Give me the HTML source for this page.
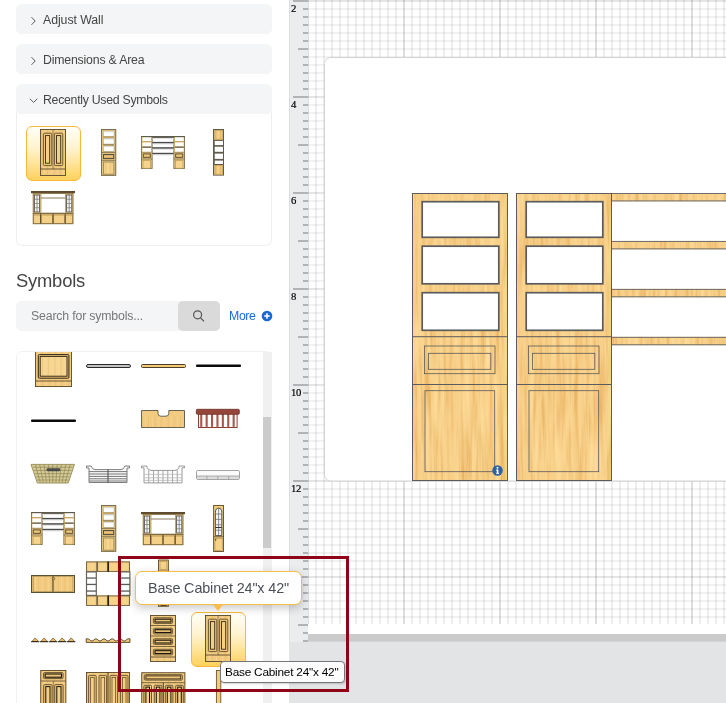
<!DOCTYPE html>
<html lang="en"><head><meta charset="utf-8"><title>Symbols</title>
<style>
*{box-sizing:border-box}
html,body{margin:0;padding:0}
body{width:726px;height:703px;overflow:hidden;background:#fff;position:relative;font-family:"Liberation Sans", sans-serif;color:#454545}
.abs{position:absolute}
.hdr span,.h2,.search span,.more,.tip span,.rl{will-change:transform}
.hdr{position:absolute;left:16px;width:256px;height:30px;background:#f4f5f6;border-radius:5px;font-size:12.3px;line-height:33px;color:#454545}
.hdr span{position:absolute;left:27px;top:0;white-space:nowrap}
.hdr svg{position:absolute;left:0;top:0}
.rbody{position:absolute;left:16px;top:108px;width:256px;height:138px;border:1px solid #efeff1;border-top:none;border-radius:0 0 6px 6px;background:#fff}
.sel{position:absolute;width:55px;height:55px;border:1px solid #f7b93a;border-radius:6px;background:linear-gradient(#fffef8 0%,#fff3cf 40%,#ffd25e 100%)}
.h2{position:absolute;left:16px;top:269px;font-size:18.4px;letter-spacing:-0.22px;line-height:24px;color:#454545;white-space:nowrap}
.search{position:absolute;left:16px;top:301px;width:204px;height:30px;background:#f4f5f7;border-radius:5px}
.search span{position:absolute;left:15px;top:0;line-height:31px;font-size:12.3px;letter-spacing:-0.167px;color:#777;white-space:nowrap}
.sbtn{position:absolute;left:162px;top:0;width:42px;height:30px;background:#dadadb;border-radius:5px}
.more{position:absolute;left:229px;top:301px;line-height:31px;font-size:12.3px;letter-spacing:-0.36px;color:#1b6ae0;white-space:nowrap}
.list{position:absolute;left:16px;top:351px;width:256px;height:360px;border:1px solid #f2f2f3;border-radius:6px 6px 0 0;background:#fff;overflow:hidden}
.track{position:absolute;left:263px;top:352px;width:9px;height:351px;background:#f0f0f0}
.thumb{position:absolute;left:263px;top:417px;width:8px;height:131px;background:#cbcbcb}
.tip{position:absolute;left:135px;top:571px;width:167px;height:34px;border:1px solid #f7bd4a;border-radius:7px;background:#fff;box-shadow:0 3px 10px rgba(0,0,0,.22);font-size:14.4px;letter-spacing:-0.135px;line-height:33px;color:#4b4f5a;white-space:nowrap}
.tip span{position:absolute;left:12px;top:0}
.ntip{position:absolute;left:220px;top:661px;width:125px;height:22px;border:1px solid #767676;border-radius:4px;background:#fcfcfc;box-shadow:1px 1px 2px rgba(0,0,0,.18);font-size:11.8px;letter-spacing:-0.215px;line-height:21px;color:#000;white-space:nowrap}
.ntip span{position:absolute;left:4px;top:0}
.frame{position:absolute;left:118px;top:556px;width:231px;height:136px;border:3px solid #8d0516}
.rl{position:absolute;left:291px;font-family:"Liberation Serif", serif;font-size:10.7px;letter-spacing:-0.3px;line-height:12px;color:#000;-webkit-text-stroke:0.2px #000}
</style></head>
<body>
<div class="abs" style="left:289px;top:0;width:437px;height:703px;background:#e3e4e6"></div>
<svg class="abs" style="left:289px;top:0" width="437" height="642" viewBox="289 0 437 642">
<defs>
<pattern id="gmin" x="307" y="0" width="8" height="8" patternUnits="userSpaceOnUse"><rect x="0" y="0" width="2" height="8" fill="#000" opacity="0.066"/><rect x="0" y="0" width="8" height="2" fill="#000" opacity="0.052"/></pattern>
<pattern id="gmaj" x="307" y="0" width="96" height="96" patternUnits="userSpaceOnUse"><rect x="0" y="0" width="2" height="96" fill="#000" opacity="0.065"/><rect x="0" y="0" width="96" height="2" fill="#000" opacity="0.05"/></pattern>
<filter id="wood" x="0" y="0" width="100%" height="100%" color-interpolation-filters="sRGB"><feTurbulence type="fractalNoise" baseFrequency="0.28 0.014" numOctaves="3" seed="7" result="n"/><feColorMatrix in="n" type="matrix" values="0 0 0 0 0.90  0 0 0 0 0.68  0 0 0 0 0.36  1.9 0 0 0 -0.76"/><feComposite in2="SourceGraphic" operator="in"/></filter>
<filter id="woodl" x="0" y="0" width="100%" height="100%" color-interpolation-filters="sRGB"><feTurbulence type="fractalNoise" baseFrequency="0.2 0.016" numOctaves="2" seed="21" result="n"/><feColorMatrix in="n" type="matrix" values="0 0 0 0 1  0 0 0 0 0.88  0 0 0 0 0.62  0 1.8 0 0 -0.7"/><feComposite in2="SourceGraphic" operator="in"/></filter>
</defs>
<rect x="308" y="0" width="418" height="634" fill="#fff"/>
<rect x="308" y="0" width="418" height="624" fill="url(#gmin)"/>
<rect x="308" y="0" width="418" height="624" fill="url(#gmaj)"/>
<rect x="308" y="634" width="418" height="7.6" fill="#cbcbcb"/>
<rect x="289" y="0" width="19" height="642" fill="#ebecee"/>
<rect x="289" y="0" width="1" height="642" fill="#dcdde0"/>
<rect x="293" y="0" width="15" height="2" fill="#b1b3b6"/>
<rect x="303" y="8" width="5" height="2" fill="#b1b3b6"/>
<rect x="303" y="16" width="5" height="2" fill="#b1b3b6"/>
<rect x="303" y="24" width="5" height="2" fill="#b1b3b6"/>
<rect x="303" y="32" width="5" height="2" fill="#b1b3b6"/>
<rect x="303" y="40" width="5" height="2" fill="#b1b3b6"/>
<rect x="298" y="48" width="10" height="2" fill="#b1b3b6"/>
<rect x="303" y="56" width="5" height="2" fill="#b1b3b6"/>
<rect x="303" y="64" width="5" height="2" fill="#b1b3b6"/>
<rect x="303" y="72" width="5" height="2" fill="#b1b3b6"/>
<rect x="303" y="80" width="5" height="2" fill="#b1b3b6"/>
<rect x="303" y="88" width="5" height="2" fill="#b1b3b6"/>
<rect x="293" y="96" width="15" height="2" fill="#b1b3b6"/>
<rect x="303" y="104" width="5" height="2" fill="#b1b3b6"/>
<rect x="303" y="112" width="5" height="2" fill="#b1b3b6"/>
<rect x="303" y="120" width="5" height="2" fill="#b1b3b6"/>
<rect x="303" y="128" width="5" height="2" fill="#b1b3b6"/>
<rect x="303" y="136" width="5" height="2" fill="#b1b3b6"/>
<rect x="298" y="144" width="10" height="2" fill="#b1b3b6"/>
<rect x="303" y="152" width="5" height="2" fill="#b1b3b6"/>
<rect x="303" y="160" width="5" height="2" fill="#b1b3b6"/>
<rect x="303" y="168" width="5" height="2" fill="#b1b3b6"/>
<rect x="303" y="176" width="5" height="2" fill="#b1b3b6"/>
<rect x="303" y="184" width="5" height="2" fill="#b1b3b6"/>
<rect x="293" y="192" width="15" height="2" fill="#b1b3b6"/>
<rect x="303" y="200" width="5" height="2" fill="#b1b3b6"/>
<rect x="303" y="208" width="5" height="2" fill="#b1b3b6"/>
<rect x="303" y="216" width="5" height="2" fill="#b1b3b6"/>
<rect x="303" y="224" width="5" height="2" fill="#b1b3b6"/>
<rect x="303" y="232" width="5" height="2" fill="#b1b3b6"/>
<rect x="298" y="240" width="10" height="2" fill="#b1b3b6"/>
<rect x="303" y="248" width="5" height="2" fill="#b1b3b6"/>
<rect x="303" y="256" width="5" height="2" fill="#b1b3b6"/>
<rect x="303" y="264" width="5" height="2" fill="#b1b3b6"/>
<rect x="303" y="272" width="5" height="2" fill="#b1b3b6"/>
<rect x="303" y="280" width="5" height="2" fill="#b1b3b6"/>
<rect x="293" y="288" width="15" height="2" fill="#b1b3b6"/>
<rect x="303" y="296" width="5" height="2" fill="#b1b3b6"/>
<rect x="303" y="304" width="5" height="2" fill="#b1b3b6"/>
<rect x="303" y="312" width="5" height="2" fill="#b1b3b6"/>
<rect x="303" y="320" width="5" height="2" fill="#b1b3b6"/>
<rect x="303" y="328" width="5" height="2" fill="#b1b3b6"/>
<rect x="298" y="336" width="10" height="2" fill="#b1b3b6"/>
<rect x="303" y="344" width="5" height="2" fill="#b1b3b6"/>
<rect x="303" y="352" width="5" height="2" fill="#b1b3b6"/>
<rect x="303" y="360" width="5" height="2" fill="#b1b3b6"/>
<rect x="303" y="368" width="5" height="2" fill="#b1b3b6"/>
<rect x="303" y="376" width="5" height="2" fill="#b1b3b6"/>
<rect x="293" y="384" width="15" height="2" fill="#b1b3b6"/>
<rect x="303" y="392" width="5" height="2" fill="#b1b3b6"/>
<rect x="303" y="400" width="5" height="2" fill="#b1b3b6"/>
<rect x="303" y="408" width="5" height="2" fill="#b1b3b6"/>
<rect x="303" y="416" width="5" height="2" fill="#b1b3b6"/>
<rect x="303" y="424" width="5" height="2" fill="#b1b3b6"/>
<rect x="298" y="432" width="10" height="2" fill="#b1b3b6"/>
<rect x="303" y="440" width="5" height="2" fill="#b1b3b6"/>
<rect x="303" y="448" width="5" height="2" fill="#b1b3b6"/>
<rect x="303" y="456" width="5" height="2" fill="#b1b3b6"/>
<rect x="303" y="464" width="5" height="2" fill="#b1b3b6"/>
<rect x="303" y="472" width="5" height="2" fill="#b1b3b6"/>
<rect x="293" y="480" width="15" height="2" fill="#b1b3b6"/>
<rect x="303" y="488" width="5" height="2" fill="#b1b3b6"/>
<rect x="303" y="496" width="5" height="2" fill="#b1b3b6"/>
<rect x="303" y="504" width="5" height="2" fill="#b1b3b6"/>
<rect x="303" y="512" width="5" height="2" fill="#b1b3b6"/>
<rect x="303" y="520" width="5" height="2" fill="#b1b3b6"/>
<rect x="298" y="528" width="10" height="2" fill="#b1b3b6"/>
<rect x="303" y="536" width="5" height="2" fill="#b1b3b6"/>
<rect x="303" y="544" width="5" height="2" fill="#b1b3b6"/>
<rect x="303" y="552" width="5" height="2" fill="#b1b3b6"/>
<rect x="303" y="560" width="5" height="2" fill="#b1b3b6"/>
<rect x="303" y="568" width="5" height="2" fill="#b1b3b6"/>
<rect x="293" y="576" width="15" height="2" fill="#b1b3b6"/>
<rect x="303" y="584" width="5" height="2" fill="#b1b3b6"/>
<rect x="303" y="592" width="5" height="2" fill="#b1b3b6"/>
<rect x="303" y="600" width="5" height="2" fill="#b1b3b6"/>
<rect x="303" y="608" width="5" height="2" fill="#b1b3b6"/>
<rect x="303" y="616" width="5" height="2" fill="#b1b3b6"/>
<rect x="298" y="624" width="10" height="2" fill="#b1b3b6"/>
<rect x="303" y="632" width="5" height="2" fill="#b1b3b6"/>
<rect x="303" y="640" width="5" height="2" fill="#b1b3b6"/>
<rect x="324.5" y="57.5" width="420" height="423.5" rx="6" fill="#fff" stroke="#d3d3d3" stroke-width="1"/>
<rect x="412" y="193" width="96" height="287.5" fill="#f8d08a"/><rect x="412" y="193" width="96" height="287.5" fill="#000" filter="url(#wood)"/><rect x="412" y="193" width="96" height="287.5" fill="#000" filter="url(#woodl)"/><rect x="422.2" y="201.7" width="76.6" height="35.6" fill="#fff" stroke="#5b5b5b" stroke-width="1.7"/><rect x="422.2" y="246.2" width="76.6" height="37.6" fill="#fff" stroke="#5b5b5b" stroke-width="1.7"/><rect x="422.2" y="292.7" width="76.6" height="37.6" fill="#fff" stroke="#5b5b5b" stroke-width="1.7"/><rect x="412" y="336.2" width="96" height="1" fill="#5b5b5b"/><rect x="412" y="384.0" width="96" height="1" fill="#5b5b5b"/><rect x="424.5" y="346" width="70.5" height="27.7" fill="none" stroke="#5b5b5b" stroke-width="0.8"/><rect x="428.5" y="353.3" width="62.3" height="16" fill="none" stroke="#5b5b5b" stroke-width="0.8"/><rect x="425" y="390.7" width="69.7" height="81" fill="none" stroke="#5b5b5b" stroke-width="0.8"/><rect x="412.5" y="193.5" width="95" height="287" fill="none" stroke="#5b5b5b" stroke-width="1"/><rect x="516" y="193" width="96" height="287.5" fill="#f8d08a"/><rect x="516" y="193" width="96" height="287.5" fill="#000" filter="url(#wood)"/><rect x="516" y="193" width="96" height="287.5" fill="#000" filter="url(#woodl)"/><rect x="526.2" y="201.7" width="76.6" height="35.6" fill="#fff" stroke="#5b5b5b" stroke-width="1.7"/><rect x="526.2" y="246.2" width="76.6" height="37.6" fill="#fff" stroke="#5b5b5b" stroke-width="1.7"/><rect x="526.2" y="292.7" width="76.6" height="37.6" fill="#fff" stroke="#5b5b5b" stroke-width="1.7"/><rect x="516" y="336.2" width="96" height="1" fill="#5b5b5b"/><rect x="516" y="384.0" width="96" height="1" fill="#5b5b5b"/><rect x="528.5" y="346" width="70.5" height="27.7" fill="none" stroke="#5b5b5b" stroke-width="0.8"/><rect x="532.5" y="353.3" width="62.3" height="16" fill="none" stroke="#5b5b5b" stroke-width="0.8"/><rect x="529" y="390.7" width="69.7" height="81" fill="none" stroke="#5b5b5b" stroke-width="0.8"/><rect x="516.5" y="193.5" width="95" height="287" fill="none" stroke="#5b5b5b" stroke-width="1"/><rect x="612" y="193.0" width="120" height="8.3" fill="#f8d08a"/><rect x="612" y="193.0" width="120" height="8.3" fill="#000" filter="url(#wood)"/><rect x="612" y="193.0" width="120" height="8.3" fill="#000" filter="url(#woodl)"/><rect x="612" y="193.00" width="120" height="1" fill="#6c6c6a"/><rect x="612" y="200.40" width="120" height="1" fill="#6c6c6a"/><rect x="612" y="240.95" width="120" height="8.3" fill="#f8d08a"/><rect x="612" y="240.95" width="120" height="8.3" fill="#000" filter="url(#wood)"/><rect x="612" y="240.95" width="120" height="8.3" fill="#000" filter="url(#woodl)"/><rect x="612" y="240.95" width="120" height="1" fill="#6c6c6a"/><rect x="612" y="248.35" width="120" height="1" fill="#6c6c6a"/><rect x="612" y="288.9" width="120" height="8.3" fill="#f8d08a"/><rect x="612" y="288.9" width="120" height="8.3" fill="#000" filter="url(#wood)"/><rect x="612" y="288.9" width="120" height="8.3" fill="#000" filter="url(#woodl)"/><rect x="612" y="288.90" width="120" height="1" fill="#6c6c6a"/><rect x="612" y="296.30" width="120" height="1" fill="#6c6c6a"/><rect x="612" y="336.85" width="120" height="8.3" fill="#f8d08a"/><rect x="612" y="336.85" width="120" height="8.3" fill="#000" filter="url(#wood)"/><rect x="612" y="336.85" width="120" height="8.3" fill="#000" filter="url(#woodl)"/><rect x="612" y="336.85" width="120" height="1" fill="#6c6c6a"/><rect x="612" y="344.25" width="120" height="1" fill="#6c6c6a"/><circle cx="497.5" cy="470.5" r="5.2" fill="#2c61a4"/><rect x="496.8" y="469.6" width="1.6" height="3.8" fill="#fff"/><rect x="496.1" y="469.6" width="1.5" height="1" fill="#fff"/><rect x="496.1" y="472.8" width="3" height="1" fill="#fff"/><circle cx="497.5" cy="467.8" r="1" fill="#fff"/>
</svg>
<div class="rl" style="top:2px">2</div>
<div class="rl" style="top:98px">4</div>
<div class="rl" style="top:194px">6</div>
<div class="rl" style="top:290px">8</div>
<div class="rl" style="top:386px">10</div>
<div class="rl" style="top:482px">12</div>
<div class="hdr" style="top:4px"><svg width="30" height="30"><path d="M15.5 13.2L19.2 17L15.5 20.8" fill="none" stroke="#5c5c5c" stroke-width="1"/></svg><span style="letter-spacing:-0.059px">Adjust Wall</span></div>
<div class="hdr" style="top:44px"><svg width="30" height="30"><path d="M15.5 13.2L19.2 17L15.5 20.8" fill="none" stroke="#5c5c5c" stroke-width="1"/></svg><span style="letter-spacing:-0.187px">Dimensions &amp; Area</span></div>
<div class="hdr" style="top:84px;z-index:2"><svg width="30" height="30"><path d="M13.8 14.7L17.6 18.4L21.4 14.7" fill="none" stroke="#5c5c5c" stroke-width="1"/></svg><span style="letter-spacing:-0.278px">Recently Used Symbols</span></div>
<div class="rbody"></div>
<div class="sel" style="left:26px;top:126px"></div>
<div class="h2">Symbols</div>
<div class="search"><span>Search for symbols...</span><div class="sbtn"><svg width="42" height="30"><circle cx="19.6" cy="13.8" r="4" fill="none" stroke="#555" stroke-width="1.2"/><path d="M22.6 16.9L26 20.4" stroke="#555" stroke-width="1.3"/></svg></div></div>
<div class="more">More</div>
<svg class="abs" style="left:261px;top:310px" width="12" height="12"><circle cx="6" cy="6" r="5.3" fill="#1b66d2"/><path d="M6 3.2V8.8M3.2 6H8.8" stroke="#fff" stroke-width="1.6"/></svg>
<div class="list"></div>
<div class="track"></div><div class="thumb"></div>
<svg class="abs" style="left:0;top:0" width="289" height="250" viewBox="0 0 289 250"><rect x="40.00" y="129.00" width="26.00" height="47.00" fill="#f2cb80"/><rect x="41.30" y="129.00" width="0.9" height="47.00" fill="#e0ae58" opacity="0.35"/><rect x="43.86" y="129.00" width="0.9" height="47.00" fill="#fbe3ae" opacity="0.35"/><rect x="47.06" y="129.00" width="0.9" height="47.00" fill="#e0ae58" opacity="0.35"/><rect x="50.90" y="129.00" width="0.9" height="47.00" fill="#fbe3ae" opacity="0.35"/><rect x="53.78" y="129.00" width="0.9" height="47.00" fill="#e0ae58" opacity="0.35"/><rect x="57.30" y="129.00" width="0.9" height="47.00" fill="#fbe3ae" opacity="0.35"/><rect x="59.86" y="129.00" width="0.9" height="47.00" fill="#e0ae58" opacity="0.35"/><rect x="63.06" y="129.00" width="0.9" height="47.00" fill="#fbe3ae" opacity="0.35"/><rect x="40.45" y="129.45" width="25.10" height="46.10" fill="none" stroke="#5a4a2c" stroke-width="0.9"/><rect x="43.40" y="133.20" width="8.40" height="32.40" fill="#efc77a" stroke="#5a4a2c" stroke-width="0.9" rx="1"/><rect x="45.50" y="135.60" width="4.20" height="27.60" fill="#f3cf88" stroke="#3a2c14" stroke-width="0.9"/><rect x="54.40" y="133.20" width="8.40" height="32.40" fill="#efc77a" stroke="#5a4a2c" stroke-width="0.9" rx="1"/><rect x="56.50" y="135.60" width="4.20" height="27.60" fill="#f3cf88" stroke="#3a2c14" stroke-width="0.9"/><path d="M53.00 129.50L53.00 169.00" stroke="#5a4a2c" stroke-width="0.6" fill="none"/><path d="M40.50 169.00L65.50 169.00" stroke="#5a4a2c" stroke-width="0.9" fill="none"/><rect x="101.00" y="129.00" width="15.20" height="46.80" fill="#ecc880"/><rect x="101.45" y="129.45" width="14.30" height="45.90" fill="none" stroke="#6e674e" stroke-width="0.9"/><rect x="103.20" y="131.10" width="10.90" height="5.20" fill="#fff" stroke="#9a8f6c" stroke-width="0.6"/><rect x="103.40" y="131.30" width="10.50" height="1.00" fill="#dcdcdc"/><rect x="103.20" y="138.30" width="10.90" height="5.80" fill="#fff" stroke="#9a8f6c" stroke-width="0.6"/><rect x="103.40" y="138.50" width="10.50" height="1.00" fill="#dcdcdc"/><rect x="103.20" y="145.90" width="10.90" height="5.50" fill="#fff" stroke="#9a8f6c" stroke-width="0.6"/><rect x="103.40" y="146.10" width="10.50" height="1.00" fill="#dcdcdc"/><path d="M103.00 137.30L114.20 137.30" stroke="#b09058" stroke-width="0.8" fill="none"/><path d="M103.00 144.80L114.20 144.80" stroke="#8a7a54" stroke-width="0.9" fill="none"/><path d="M101.50 152.60L115.70 152.60" stroke="#6e674e" stroke-width="0.8" fill="none"/><rect x="103.40" y="154.60" width="10.40" height="3.80" fill="#e8c078" stroke="#4a4434" stroke-width="1"/><path d="M101.50 160.30L115.70 160.30" stroke="#6e674e" stroke-width="0.8" fill="none"/><rect x="103.30" y="162.00" width="10.60" height="12.20" fill="#f5d28c" stroke="#8a7a50" stroke-width="0.8"/><rect x="105.30" y="162.60" width="0.9" height="11.00" fill="#e0ae58" opacity="0.35"/><rect x="107.38" y="162.60" width="0.9" height="11.00" fill="#fbe3ae" opacity="0.35"/><rect x="109.98" y="162.60" width="0.9" height="11.00" fill="#e0ae58" opacity="0.35"/><rect x="141.00" y="136.00" width="11.50" height="33.00" fill="#f2cb80"/><rect x="141.40" y="136.40" width="10.70" height="32.20" fill="none" stroke="#6f684e" stroke-width="0.8"/><rect x="142.50" y="136.90" width="8.50" height="4.10" fill="#fff"/><rect x="142.50" y="142.40" width="8.50" height="4.10" fill="#fff"/><rect x="142.50" y="147.80" width="8.50" height="4.10" fill="#fff"/><path d="M142.20 141.70L151.30 141.70" stroke="#b49a62" stroke-width="0.9" fill="none"/><path d="M142.20 147.10L151.30 147.10" stroke="#3a3a3a" stroke-width="1" fill="none"/><path d="M142.20 152.30L151.30 152.30" stroke="#8a7a54" stroke-width="0.8" fill="none"/><rect x="143.20" y="153.90" width="7.10" height="3.40" fill="#efc77a" stroke="#4e4228" stroke-width="0.9"/><path d="M141.40 159.00L152.10 159.00" stroke="#6f684e" stroke-width="0.8" fill="none"/><rect x="143.00" y="160.40" width="7.50" height="7.80" fill="#f6d48e" stroke="#b09050" stroke-width="0.6"/><rect x="173.50" y="136.00" width="11.50" height="33.00" fill="#f2cb80"/><rect x="173.90" y="136.40" width="10.70" height="32.20" fill="none" stroke="#6f684e" stroke-width="0.8"/><rect x="175.00" y="136.90" width="8.50" height="4.10" fill="#fff"/><rect x="175.00" y="142.40" width="8.50" height="4.10" fill="#fff"/><rect x="175.00" y="147.80" width="8.50" height="4.10" fill="#fff"/><path d="M174.70 141.70L183.80 141.70" stroke="#b49a62" stroke-width="0.9" fill="none"/><path d="M174.70 147.10L183.80 147.10" stroke="#3a3a3a" stroke-width="1" fill="none"/><path d="M174.70 152.30L183.80 152.30" stroke="#8a7a54" stroke-width="0.8" fill="none"/><rect x="175.70" y="153.90" width="7.10" height="3.40" fill="#efc77a" stroke="#4e4228" stroke-width="0.9"/><path d="M173.90 159.00L184.60 159.00" stroke="#6f684e" stroke-width="0.8" fill="none"/><rect x="175.50" y="160.40" width="7.50" height="7.80" fill="#f6d48e" stroke="#b09050" stroke-width="0.6"/><rect x="152.30" y="136.30" width="21.40" height="1.60" fill="#4a4a4a"/><rect x="152.50" y="137.90" width="21.00" height="1.00" fill="#e2e2e2"/><rect x="152.30" y="141.90" width="21.40" height="1.60" fill="#4a4a4a"/><rect x="152.50" y="143.50" width="21.00" height="1.00" fill="#e2e2e2"/><rect x="152.30" y="147.20" width="21.40" height="1.60" fill="#4a4a4a"/><rect x="152.50" y="148.80" width="21.00" height="1.00" fill="#e2e2e2"/><rect x="152.30" y="152.80" width="21.40" height="1.60" fill="#4a4a4a"/><rect x="152.50" y="154.40" width="21.00" height="1.00" fill="#e2e2e2"/><rect x="141.00" y="136.00" width="44.00" height="1.20" fill="#5e5a4c"/><rect x="213.00" y="129.00" width="11.00" height="46.60" fill="#605a4a"/><rect x="214.10" y="130.00" width="8.90" height="9.80" fill="#f2cb80"/><rect x="215.70" y="130.40" width="0.9" height="9.00" fill="#e0ae58" opacity="0.5"/><rect x="217.62" y="130.40" width="0.9" height="9.00" fill="#fbe3ae" opacity="0.5"/><rect x="220.02" y="130.40" width="0.9" height="9.00" fill="#e0ae58" opacity="0.5"/><rect x="215.00" y="130.60" width="7.20" height="8.60" fill="none" stroke="#b8934a" stroke-width="0.6"/><rect x="214.10" y="165.00" width="8.90" height="9.80" fill="#f2cb80"/><rect x="215.70" y="165.40" width="0.9" height="9.00" fill="#e0ae58" opacity="0.5"/><rect x="217.62" y="165.40" width="0.9" height="9.00" fill="#fbe3ae" opacity="0.5"/><rect x="220.02" y="165.40" width="0.9" height="9.00" fill="#e0ae58" opacity="0.5"/><rect x="215.00" y="165.60" width="7.20" height="8.60" fill="none" stroke="#b8934a" stroke-width="0.6"/><rect x="214.70" y="140.90" width="8.30" height="4.20" fill="#fff"/><rect x="214.70" y="146.70" width="8.30" height="5.10" fill="#fff"/><rect x="214.70" y="153.60" width="8.30" height="5.30" fill="#fff"/><rect x="214.70" y="160.60" width="8.30" height="3.40" fill="#fff"/><rect x="32.80" y="192.50" width="40.50" height="31.50" fill="#f2cb80"/><rect x="31.00" y="191.00" width="44.00" height="2.20" fill="#5e4a2c"/><rect x="41.00" y="193.60" width="24.60" height="19.40" fill="#fff" stroke="#9a8a66" stroke-width="0.7"/><path d="M41.00 198.00L65.60 198.00" stroke="#8a7a58" stroke-width="1" fill="none"/><rect x="34.40" y="195.00" width="5.20" height="17.00" fill="#f4f6f8" stroke="#555" stroke-width="0.9"/><path d="M37.00 195.00L37.00 212.00" stroke="#666" stroke-width="0.7" fill="none"/><path d="M34.40 199.25L39.60 199.25" stroke="#666" stroke-width="0.6" fill="none"/><path d="M34.40 203.50L39.60 203.50" stroke="#666" stroke-width="0.6" fill="none"/><path d="M34.40 207.75L39.60 207.75" stroke="#666" stroke-width="0.6" fill="none"/><rect x="66.60" y="195.00" width="5.20" height="17.00" fill="#f4f6f8" stroke="#555" stroke-width="0.9"/><path d="M69.20 195.00L69.20 212.00" stroke="#666" stroke-width="0.7" fill="none"/><path d="M66.60 199.25L71.80 199.25" stroke="#666" stroke-width="0.6" fill="none"/><path d="M66.60 203.50L71.80 203.50" stroke="#666" stroke-width="0.6" fill="none"/><path d="M66.60 207.75L71.80 207.75" stroke="#666" stroke-width="0.6" fill="none"/><path d="M32.80 213.60L73.20 213.60" stroke="#6b5a38" stroke-width="0.9" fill="none"/><rect x="33.40" y="215.00" width="7.20" height="8.40" fill="#f5d088" stroke="#a8884c" stroke-width="0.7"/><rect x="41.40" y="215.00" width="11.20" height="8.40" fill="#f5d088" stroke="#a8884c" stroke-width="0.7"/><rect x="53.40" y="215.00" width="11.20" height="8.40" fill="#f5d088" stroke="#a8884c" stroke-width="0.7"/><rect x="65.40" y="215.00" width="7.20" height="8.40" fill="#f5d088" stroke="#a8884c" stroke-width="0.7"/><path d="M40.60 213.60L40.60 224.00" stroke="#5a4a2c" stroke-width="1" fill="none"/><path d="M53.00 213.60L53.00 224.00" stroke="#5a4a2c" stroke-width="1" fill="none"/><path d="M65.20 213.60L65.20 224.00" stroke="#5a4a2c" stroke-width="1" fill="none"/><rect x="33.20" y="193.20" width="39.80" height="30.60" fill="none" stroke="#7a6840" stroke-width="0.8"/></svg>
<svg class="abs" style="left:17px;top:352px" width="246" height="351" viewBox="17 352 246 351"><rect x="35.00" y="340.00" width="37.00" height="47.00" fill="#f2cb80"/><rect x="36.30" y="340.00" width="0.9" height="47.00" fill="#e0ae58" opacity="0.35"/><rect x="38.86" y="340.00" width="0.9" height="47.00" fill="#fbe3ae" opacity="0.35"/><rect x="42.06" y="340.00" width="0.9" height="47.00" fill="#e0ae58" opacity="0.35"/><rect x="45.90" y="340.00" width="0.9" height="47.00" fill="#fbe3ae" opacity="0.35"/><rect x="48.78" y="340.00" width="0.9" height="47.00" fill="#e0ae58" opacity="0.35"/><rect x="52.30" y="340.00" width="0.9" height="47.00" fill="#fbe3ae" opacity="0.35"/><rect x="54.86" y="340.00" width="0.9" height="47.00" fill="#e0ae58" opacity="0.35"/><rect x="58.06" y="340.00" width="0.9" height="47.00" fill="#fbe3ae" opacity="0.35"/><rect x="61.90" y="340.00" width="0.9" height="47.00" fill="#e0ae58" opacity="0.35"/><rect x="64.78" y="340.00" width="0.9" height="47.00" fill="#fbe3ae" opacity="0.35"/><rect x="68.30" y="340.00" width="0.9" height="47.00" fill="#e0ae58" opacity="0.35"/><rect x="70.86" y="340.00" width="0.9" height="47.00" fill="#fbe3ae" opacity="0.35"/><rect x="35.45" y="340.45" width="36.10" height="46.10" fill="none" stroke="#5a4a2c" stroke-width="0.9"/><rect x="38.30" y="354.60" width="30.60" height="23.60" fill="#efc77a" stroke="#2a2418" stroke-width="1" rx="1"/><rect x="40.20" y="356.40" width="26.80" height="19.80" fill="#f5d590" stroke="#3a2c14" stroke-width="1"/><rect x="42.10" y="357.00" width="0.9" height="18.60" fill="#e0ae58" opacity="0.35"/><rect x="44.66" y="357.00" width="0.9" height="18.60" fill="#fbe3ae" opacity="0.35"/><rect x="47.86" y="357.00" width="0.9" height="18.60" fill="#e0ae58" opacity="0.35"/><rect x="51.70" y="357.00" width="0.9" height="18.60" fill="#fbe3ae" opacity="0.35"/><rect x="54.58" y="357.00" width="0.9" height="18.60" fill="#e0ae58" opacity="0.35"/><rect x="58.10" y="357.00" width="0.9" height="18.60" fill="#fbe3ae" opacity="0.35"/><rect x="60.66" y="357.00" width="0.9" height="18.60" fill="#e0ae58" opacity="0.35"/><rect x="63.86" y="357.00" width="0.9" height="18.60" fill="#fbe3ae" opacity="0.35"/><path d="M35.50 381.00L71.50 381.00" stroke="#5a4a2c" stroke-width="0.9" fill="none"/><rect x="86.50" y="364.50" width="44.00" height="3.00" fill="#c4c4c4" stroke="#2a2a2a" stroke-width="1" rx="1.5"/><rect x="141.50" y="364.50" width="44.00" height="3.00" fill="#f3c878" stroke="#3a2c14" stroke-width="0.9" rx="1"/><rect x="196.00" y="364.60" width="45.00" height="2.40" fill="#0a0a0a" rx="1"/><rect x="31.00" y="419.60" width="45.00" height="2.40" fill="#0a0a0a" rx="1"/><path d="M141.5 410.5H158V413.4Q158 416.2 160.8 416.2H166Q168.8 416.2 168.8 413.4V410.5H184.5V427.5H141.5Z" fill="#f2cb80"/><rect x="142.30" y="416.60" width="0.9" height="11.00" fill="#e0ae58" opacity="0.3"/><rect x="144.86" y="416.60" width="0.9" height="11.00" fill="#fbe3ae" opacity="0.3"/><rect x="148.06" y="416.60" width="0.9" height="11.00" fill="#e0ae58" opacity="0.3"/><rect x="151.90" y="416.60" width="0.9" height="11.00" fill="#fbe3ae" opacity="0.3"/><rect x="154.78" y="416.60" width="0.9" height="11.00" fill="#e0ae58" opacity="0.3"/><rect x="158.30" y="416.60" width="0.9" height="11.00" fill="#fbe3ae" opacity="0.3"/><rect x="160.86" y="416.60" width="0.9" height="11.00" fill="#e0ae58" opacity="0.3"/><rect x="164.06" y="416.60" width="0.9" height="11.00" fill="#fbe3ae" opacity="0.3"/><rect x="167.90" y="416.60" width="0.9" height="11.00" fill="#e0ae58" opacity="0.3"/><rect x="170.78" y="416.60" width="0.9" height="11.00" fill="#fbe3ae" opacity="0.3"/><rect x="174.30" y="416.60" width="0.9" height="11.00" fill="#e0ae58" opacity="0.3"/><rect x="176.86" y="416.60" width="0.9" height="11.00" fill="#fbe3ae" opacity="0.3"/><rect x="180.06" y="416.60" width="0.9" height="11.00" fill="#e0ae58" opacity="0.3"/><rect x="183.90" y="416.60" width="0.9" height="11.00" fill="#fbe3ae" opacity="0.3"/><path d="M141.5 410.5H158V413.4Q158 416.2 160.8 416.2H166Q168.8 416.2 168.8 413.4V410.5H184.5V427.5H141.5Z" fill="none" stroke="#5a5444" stroke-width="0.9"/><rect x="198.50" y="413.30" width="38.60" height="14.20" fill="#fff" stroke="#8e3f33" stroke-width="1"/><rect x="200.20" y="413.90" width="2.10" height="13.00" fill="#a8584a"/><rect x="205.60" y="413.90" width="2.10" height="13.00" fill="#a8584a"/><rect x="211.00" y="413.90" width="2.10" height="13.00" fill="#a8584a"/><rect x="216.40" y="413.90" width="2.10" height="13.00" fill="#a8584a"/><rect x="221.80" y="413.90" width="2.10" height="13.00" fill="#a8584a"/><rect x="227.20" y="413.90" width="2.10" height="13.00" fill="#a8584a"/><rect x="232.60" y="413.90" width="2.10" height="13.00" fill="#a8584a"/><rect x="196.30" y="409.30" width="43.00" height="5.00" fill="#96463a" stroke="#6e2c24" stroke-width="0.8" rx="1"/><path d="M31 464.4H74.5L68.2 483H37.3Z" fill="#d3ca9c" stroke="#968a52" stroke-width="0.9"/><path d="M35.35 464.50L40.39 483.00" stroke="#92864e" stroke-width="0.7" fill="none"/><path d="M39.70 464.50L43.48 483.00" stroke="#92864e" stroke-width="0.7" fill="none"/><path d="M44.05 464.50L46.57 483.00" stroke="#92864e" stroke-width="0.7" fill="none"/><path d="M48.40 464.50L49.66 483.00" stroke="#92864e" stroke-width="0.7" fill="none"/><path d="M52.75 464.50L52.75 483.00" stroke="#92864e" stroke-width="0.7" fill="none"/><path d="M57.10 464.50L55.84 483.00" stroke="#92864e" stroke-width="0.7" fill="none"/><path d="M61.45 464.50L58.93 483.00" stroke="#92864e" stroke-width="0.7" fill="none"/><path d="M65.80 464.50L62.02 483.00" stroke="#92864e" stroke-width="0.7" fill="none"/><path d="M70.15 464.50L65.11 483.00" stroke="#92864e" stroke-width="0.7" fill="none"/><path d="M33.00 467.20L72.50 467.20" stroke="#92864e" stroke-width="0.7" fill="none"/><path d="M34.00 470.40L71.50 470.40" stroke="#92864e" stroke-width="0.7" fill="none"/><path d="M35.00 473.60L70.50 473.60" stroke="#92864e" stroke-width="0.7" fill="none"/><path d="M36.00 476.80L69.50 476.80" stroke="#92864e" stroke-width="0.7" fill="none"/><path d="M37.00 480.00L68.50 480.00" stroke="#92864e" stroke-width="0.7" fill="none"/><rect x="46.60" y="468.20" width="13.60" height="3.00" fill="#4a4a48" rx="1"/><path d="M86.5 466H91Q92.4 469.6 95 469.6H121Q123.6 469.6 125 466H129.5V468H127V482.5H89V468H86.5Z" fill="#fafafa" stroke="#707070" stroke-width="0.9"/><path d="M89.00 471.60L127.00 471.60" stroke="#707070" stroke-width="0.95" fill="none"/><path d="M89.00 474.00L127.00 474.00" stroke="#707070" stroke-width="0.95" fill="none"/><path d="M89.00 476.40L127.00 476.40" stroke="#707070" stroke-width="0.95" fill="none"/><path d="M89.00 478.80L127.00 478.80" stroke="#707070" stroke-width="0.95" fill="none"/><path d="M89.00 481.00L127.00 481.00" stroke="#707070" stroke-width="0.95" fill="none"/><path d="M108.00 469.60L108.00 482.50" stroke="#555" stroke-width="1.1" fill="none"/><path d="M141.5 466.0H147V467.4Q148 470.4 151 470.4H175Q178 470.4 179 467.4V466.0H184.5V467.79999999999995H182V482.9H144V467.79999999999995H141.5Z" fill="#fdfdfd" stroke="#8f8f8f" stroke-width="0.9"/><path d="M148.75 470.40L148.75 482.90" stroke="#8f8f8f" stroke-width="0.8" fill="none"/><path d="M153.50 470.40L153.50 482.90" stroke="#8f8f8f" stroke-width="0.8" fill="none"/><path d="M158.25 470.40L158.25 482.90" stroke="#8f8f8f" stroke-width="0.8" fill="none"/><path d="M163.00 470.40L163.00 482.90" stroke="#8f8f8f" stroke-width="0.8" fill="none"/><path d="M167.75 470.40L167.75 482.90" stroke="#8f8f8f" stroke-width="0.8" fill="none"/><path d="M172.50 470.40L172.50 482.90" stroke="#8f8f8f" stroke-width="0.8" fill="none"/><path d="M177.25 470.40L177.25 482.90" stroke="#8f8f8f" stroke-width="0.8" fill="none"/><path d="M144.00 474.40L182.00 474.40" stroke="#b5b5b5" stroke-width="0.7" fill="none"/><path d="M144.00 477.80L182.00 477.80" stroke="#b5b5b5" stroke-width="0.7" fill="none"/><path d="M144.00 480.40L182.00 480.40" stroke="#b5b5b5" stroke-width="0.7" fill="none"/><rect x="196.50" y="470.50" width="43.00" height="9.00" fill="#fbfbfb" stroke="#9a9a9a" stroke-width="0.9" rx="1.2"/><rect x="197.00" y="476.00" width="42.00" height="3.00" fill="#dcdcdc"/><path d="M196.50 476.00L239.50 476.00" stroke="#9a9a9a" stroke-width="0.8" fill="none"/><path d="M206.90 476.00L206.90 479.50" stroke="#9a9a9a" stroke-width="0.8" fill="none"/><path d="M217.80 476.00L217.80 479.50" stroke="#9a9a9a" stroke-width="0.8" fill="none"/><path d="M228.70 476.00L228.70 479.50" stroke="#9a9a9a" stroke-width="0.8" fill="none"/><rect x="31.00" y="512.00" width="11.50" height="33.00" fill="#f2cb80"/><rect x="31.40" y="512.40" width="10.70" height="32.20" fill="none" stroke="#6f684e" stroke-width="0.8"/><rect x="32.50" y="512.90" width="8.50" height="4.10" fill="#fff"/><rect x="32.50" y="518.40" width="8.50" height="4.10" fill="#fff"/><rect x="32.50" y="523.80" width="8.50" height="4.10" fill="#fff"/><path d="M32.20 517.70L41.30 517.70" stroke="#b49a62" stroke-width="0.9" fill="none"/><path d="M32.20 523.10L41.30 523.10" stroke="#3a3a3a" stroke-width="1" fill="none"/><path d="M32.20 528.30L41.30 528.30" stroke="#8a7a54" stroke-width="0.8" fill="none"/><rect x="33.20" y="529.90" width="7.10" height="3.40" fill="#efc77a" stroke="#4e4228" stroke-width="0.9"/><path d="M31.40 535.00L42.10 535.00" stroke="#6f684e" stroke-width="0.8" fill="none"/><rect x="33.00" y="536.40" width="7.50" height="7.80" fill="#f6d48e" stroke="#b09050" stroke-width="0.6"/><rect x="63.50" y="512.00" width="11.50" height="33.00" fill="#f2cb80"/><rect x="63.90" y="512.40" width="10.70" height="32.20" fill="none" stroke="#6f684e" stroke-width="0.8"/><rect x="65.00" y="512.90" width="8.50" height="4.10" fill="#fff"/><rect x="65.00" y="518.40" width="8.50" height="4.10" fill="#fff"/><rect x="65.00" y="523.80" width="8.50" height="4.10" fill="#fff"/><path d="M64.70 517.70L73.80 517.70" stroke="#b49a62" stroke-width="0.9" fill="none"/><path d="M64.70 523.10L73.80 523.10" stroke="#3a3a3a" stroke-width="1" fill="none"/><path d="M64.70 528.30L73.80 528.30" stroke="#8a7a54" stroke-width="0.8" fill="none"/><rect x="65.70" y="529.90" width="7.10" height="3.40" fill="#efc77a" stroke="#4e4228" stroke-width="0.9"/><path d="M63.90 535.00L74.60 535.00" stroke="#6f684e" stroke-width="0.8" fill="none"/><rect x="65.50" y="536.40" width="7.50" height="7.80" fill="#f6d48e" stroke="#b09050" stroke-width="0.6"/><rect x="42.30" y="512.30" width="21.40" height="1.60" fill="#4a4a4a"/><rect x="42.50" y="513.90" width="21.00" height="1.00" fill="#e2e2e2"/><rect x="42.30" y="517.90" width="21.40" height="1.60" fill="#4a4a4a"/><rect x="42.50" y="519.50" width="21.00" height="1.00" fill="#e2e2e2"/><rect x="42.30" y="523.20" width="21.40" height="1.60" fill="#4a4a4a"/><rect x="42.50" y="524.80" width="21.00" height="1.00" fill="#e2e2e2"/><rect x="42.30" y="528.80" width="21.40" height="1.60" fill="#4a4a4a"/><rect x="42.50" y="530.40" width="21.00" height="1.00" fill="#e2e2e2"/><rect x="31.00" y="512.00" width="44.00" height="1.20" fill="#5e5a4c"/><rect x="101.00" y="505.00" width="15.20" height="46.80" fill="#ecc880"/><rect x="101.45" y="505.45" width="14.30" height="45.90" fill="none" stroke="#6e674e" stroke-width="0.9"/><rect x="103.20" y="507.10" width="10.90" height="5.20" fill="#fff" stroke="#9a8f6c" stroke-width="0.6"/><rect x="103.40" y="507.30" width="10.50" height="1.00" fill="#dcdcdc"/><rect x="103.20" y="514.30" width="10.90" height="5.80" fill="#fff" stroke="#9a8f6c" stroke-width="0.6"/><rect x="103.40" y="514.50" width="10.50" height="1.00" fill="#dcdcdc"/><rect x="103.20" y="521.90" width="10.90" height="5.50" fill="#fff" stroke="#9a8f6c" stroke-width="0.6"/><rect x="103.40" y="522.10" width="10.50" height="1.00" fill="#dcdcdc"/><path d="M103.00 513.30L114.20 513.30" stroke="#b09058" stroke-width="0.8" fill="none"/><path d="M103.00 520.80L114.20 520.80" stroke="#8a7a54" stroke-width="0.9" fill="none"/><path d="M101.50 528.60L115.70 528.60" stroke="#6e674e" stroke-width="0.8" fill="none"/><rect x="103.40" y="530.60" width="10.40" height="3.80" fill="#e8c078" stroke="#4a4434" stroke-width="1"/><path d="M101.50 536.30L115.70 536.30" stroke="#6e674e" stroke-width="0.8" fill="none"/><rect x="103.30" y="538.00" width="10.60" height="12.20" fill="#f5d28c" stroke="#8a7a50" stroke-width="0.8"/><rect x="105.30" y="538.60" width="0.9" height="11.00" fill="#e0ae58" opacity="0.35"/><rect x="107.38" y="538.60" width="0.9" height="11.00" fill="#fbe3ae" opacity="0.35"/><rect x="109.98" y="538.60" width="0.9" height="11.00" fill="#e0ae58" opacity="0.35"/><rect x="142.80" y="513.50" width="40.50" height="31.50" fill="#f2cb80"/><rect x="141.00" y="512.00" width="44.00" height="2.20" fill="#5e4a2c"/><rect x="151.00" y="514.60" width="24.60" height="19.40" fill="#fff" stroke="#9a8a66" stroke-width="0.7"/><path d="M151.00 519.00L175.60 519.00" stroke="#8a7a58" stroke-width="1" fill="none"/><rect x="144.40" y="516.00" width="5.20" height="17.00" fill="#f4f6f8" stroke="#555" stroke-width="0.9"/><path d="M147.00 516.00L147.00 533.00" stroke="#666" stroke-width="0.7" fill="none"/><path d="M144.40 520.25L149.60 520.25" stroke="#666" stroke-width="0.6" fill="none"/><path d="M144.40 524.50L149.60 524.50" stroke="#666" stroke-width="0.6" fill="none"/><path d="M144.40 528.75L149.60 528.75" stroke="#666" stroke-width="0.6" fill="none"/><rect x="176.60" y="516.00" width="5.20" height="17.00" fill="#f4f6f8" stroke="#555" stroke-width="0.9"/><path d="M179.20 516.00L179.20 533.00" stroke="#666" stroke-width="0.7" fill="none"/><path d="M176.60 520.25L181.80 520.25" stroke="#666" stroke-width="0.6" fill="none"/><path d="M176.60 524.50L181.80 524.50" stroke="#666" stroke-width="0.6" fill="none"/><path d="M176.60 528.75L181.80 528.75" stroke="#666" stroke-width="0.6" fill="none"/><path d="M142.80 534.60L183.20 534.60" stroke="#6b5a38" stroke-width="0.9" fill="none"/><rect x="143.40" y="536.00" width="7.20" height="8.40" fill="#f5d088" stroke="#a8884c" stroke-width="0.7"/><rect x="151.40" y="536.00" width="11.20" height="8.40" fill="#f5d088" stroke="#a8884c" stroke-width="0.7"/><rect x="163.40" y="536.00" width="11.20" height="8.40" fill="#f5d088" stroke="#a8884c" stroke-width="0.7"/><rect x="175.40" y="536.00" width="7.20" height="8.40" fill="#f5d088" stroke="#a8884c" stroke-width="0.7"/><path d="M150.60 534.60L150.60 545.00" stroke="#5a4a2c" stroke-width="1" fill="none"/><path d="M163.00 534.60L163.00 545.00" stroke="#5a4a2c" stroke-width="1" fill="none"/><path d="M175.20 534.60L175.20 545.00" stroke="#5a4a2c" stroke-width="1" fill="none"/><rect x="143.20" y="514.20" width="39.80" height="30.60" fill="none" stroke="#7a6840" stroke-width="0.8"/><rect x="213.20" y="505.00" width="10.80" height="47.00" fill="#f2cb80"/><rect x="213.65" y="505.45" width="9.90" height="46.10" fill="none" stroke="#5e4e30" stroke-width="0.9"/><path d="M215.39999999999998 535.6V512.6Q215.39999999999998 508.2 218.6 508.2Q221.79999999999998 508.2 221.79999999999998 512.6V535.6Z" fill="#f2f4f6" stroke="#444" stroke-width="0.9"/><path d="M218.60 508.20L218.60 535.60" stroke="#666" stroke-width="0.7" fill="none"/><path d="M215.40 514.00L221.80 514.00" stroke="#666" stroke-width="0.7" fill="none"/><path d="M215.40 519.40L221.80 519.40" stroke="#666" stroke-width="0.7" fill="none"/><path d="M215.40 524.80L221.80 524.80" stroke="#666" stroke-width="0.7" fill="none"/><path d="M215.40 530.20L221.80 530.20" stroke="#666" stroke-width="0.7" fill="none"/><path d="M215.40 527.50L221.80 527.50" stroke="#333" stroke-width="1" fill="none"/><path d="M213.60 536.80L223.60 536.80" stroke="#5e4e30" stroke-width="0.9" fill="none"/><rect x="215.00" y="538.40" width="7.20" height="12.00" fill="#f5d288" stroke="#b09050" stroke-width="0.6"/><rect x="215.20" y="539.00" width="1.00" height="1.60" fill="#333"/><rect x="31.00" y="575.00" width="44.00" height="18.00" fill="#f2cb80"/><rect x="32.30" y="575.00" width="0.9" height="18.00" fill="#e0ae58" opacity="0.35"/><rect x="34.86" y="575.00" width="0.9" height="18.00" fill="#fbe3ae" opacity="0.35"/><rect x="38.06" y="575.00" width="0.9" height="18.00" fill="#e0ae58" opacity="0.35"/><rect x="41.90" y="575.00" width="0.9" height="18.00" fill="#fbe3ae" opacity="0.35"/><rect x="44.78" y="575.00" width="0.9" height="18.00" fill="#e0ae58" opacity="0.35"/><rect x="48.30" y="575.00" width="0.9" height="18.00" fill="#fbe3ae" opacity="0.35"/><rect x="50.86" y="575.00" width="0.9" height="18.00" fill="#e0ae58" opacity="0.35"/><rect x="54.06" y="575.00" width="0.9" height="18.00" fill="#fbe3ae" opacity="0.35"/><rect x="57.90" y="575.00" width="0.9" height="18.00" fill="#e0ae58" opacity="0.35"/><rect x="60.78" y="575.00" width="0.9" height="18.00" fill="#fbe3ae" opacity="0.35"/><rect x="64.30" y="575.00" width="0.9" height="18.00" fill="#e0ae58" opacity="0.35"/><rect x="66.86" y="575.00" width="0.9" height="18.00" fill="#fbe3ae" opacity="0.35"/><rect x="70.06" y="575.00" width="0.9" height="18.00" fill="#e0ae58" opacity="0.35"/><rect x="73.90" y="575.00" width="0.9" height="18.00" fill="#fbe3ae" opacity="0.35"/><rect x="31.55" y="575.55" width="42.90" height="16.90" fill="none" stroke="#5a5038" stroke-width="1.1"/><rect x="33.40" y="576.60" width="19.00" height="15.00" fill="none" stroke="#b89a58" stroke-width="0.7"/><rect x="53.80" y="576.60" width="19.00" height="15.00" fill="none" stroke="#b89a58" stroke-width="0.7"/><path d="M53.00 575.50L53.00 592.50" stroke="#5a5038" stroke-width="1" fill="none"/><circle cx="53.6" cy="578.6" r="1.2" fill="#c8a868" stroke="#5a4a2c" stroke-width="0.6"/><rect x="86.00" y="561.40" width="44.00" height="44.50" fill="#fff"/><rect x="86.00" y="561.40" width="44.00" height="10.50" fill="#f2cb80"/><rect x="86.50" y="561.90" width="10.30" height="9.50" fill="none" stroke="#6a5c40" stroke-width="0.9"/><rect x="88.20" y="563.20" width="7.00" height="7.40" fill="#f6d48c"/><rect x="97.40" y="561.90" width="10.30" height="9.50" fill="none" stroke="#6a5c40" stroke-width="0.9"/><rect x="99.10" y="563.20" width="7.00" height="7.40" fill="#f6d48c"/><rect x="108.30" y="561.90" width="10.30" height="9.50" fill="none" stroke="#6a5c40" stroke-width="0.9"/><rect x="110.00" y="563.20" width="7.00" height="7.40" fill="#f6d48c"/><rect x="119.20" y="561.90" width="10.30" height="9.50" fill="none" stroke="#6a5c40" stroke-width="0.9"/><rect x="120.90" y="563.20" width="7.00" height="7.40" fill="#f6d48c"/><rect x="107.60" y="561.40" width="1.40" height="10.50" fill="#2a2418"/><rect x="86.00" y="595.40" width="44.00" height="10.50" fill="#f2cb80"/><rect x="86.50" y="595.90" width="10.30" height="9.50" fill="none" stroke="#6a5c40" stroke-width="0.9"/><rect x="88.20" y="597.20" width="7.00" height="7.40" fill="#f6d48c"/><rect x="97.40" y="595.90" width="10.30" height="9.50" fill="none" stroke="#6a5c40" stroke-width="0.9"/><rect x="99.10" y="597.20" width="7.00" height="7.40" fill="#f6d48c"/><rect x="108.30" y="595.90" width="10.30" height="9.50" fill="none" stroke="#6a5c40" stroke-width="0.9"/><rect x="110.00" y="597.20" width="7.00" height="7.40" fill="#f6d48c"/><rect x="119.20" y="595.90" width="10.30" height="9.50" fill="none" stroke="#6a5c40" stroke-width="0.9"/><rect x="120.90" y="597.20" width="7.00" height="7.40" fill="#f6d48c"/><rect x="107.60" y="595.40" width="1.40" height="10.50" fill="#2a2418"/><rect x="86.50" y="571.90" width="9.80" height="23.50" fill="#fff" stroke="#6a6458" stroke-width="1.2"/><rect x="86.40" y="577.40" width="10.00" height="1.30" fill="#5a5a5a"/><rect x="86.40" y="583.80" width="10.00" height="1.30" fill="#5a5a5a"/><rect x="86.40" y="590.40" width="10.00" height="1.30" fill="#5a5a5a"/><rect x="120.10" y="571.90" width="9.80" height="23.50" fill="#fff" stroke="#6a6458" stroke-width="1.2"/><rect x="120.00" y="577.40" width="10.00" height="1.30" fill="#5a5a5a"/><rect x="120.00" y="583.80" width="10.00" height="1.30" fill="#5a5a5a"/><rect x="120.00" y="590.40" width="10.00" height="1.30" fill="#5a5a5a"/><rect x="158.00" y="559.60" width="10.80" height="47.00" fill="#f2cb80"/><rect x="158.45" y="560.05" width="9.90" height="46.10" fill="none" stroke="#5e4e30" stroke-width="0.9"/><rect x="160.00" y="561.60" width="6.80" height="8.00" fill="#f5d288" stroke="#b09050" stroke-width="0.6"/><path d="M158.40 571.20L168.40 571.20" stroke="#5e4e30" stroke-width="0.9" fill="none"/><path d="M160.50 605.20L166.60 605.20" stroke="#3a2c14" stroke-width="1" fill="none"/><path d="M31.90 641.5L34.70 638.3H35.70L38.50 641.5Z" fill="#e9ba62" stroke="#4a3818" stroke-width="0.6"/><rect x="31.00" y="641.30" width="8.40" height="0.90" fill="#1a140a"/><path d="M40.90 641.5L43.70 638.3H44.70L47.50 641.5Z" fill="#e9ba62" stroke="#4a3818" stroke-width="0.6"/><rect x="40.00" y="641.30" width="8.40" height="0.90" fill="#1a140a"/><path d="M49.90 641.5L52.70 638.3H53.70L56.50 641.5Z" fill="#e9ba62" stroke="#4a3818" stroke-width="0.6"/><rect x="49.00" y="641.30" width="8.40" height="0.90" fill="#1a140a"/><path d="M58.90 641.5L61.70 638.3H62.70L65.50 641.5Z" fill="#e9ba62" stroke="#4a3818" stroke-width="0.6"/><rect x="58.00" y="641.30" width="8.40" height="0.90" fill="#1a140a"/><path d="M67.90 641.5L70.70 638.3H71.70L74.50 641.5Z" fill="#e9ba62" stroke="#4a3818" stroke-width="0.6"/><rect x="67.00" y="641.30" width="8.40" height="0.90" fill="#1a140a"/><path d="M86.20 642.40V638.80H87.80C89.42 638.80 90.23 641.00 91.85 641.00C93.47 641.00 94.28 638.80 95.90 638.80C97.52 638.80 98.33 641.00 99.95 641.00C101.57 641.00 102.38 638.80 104.00 638.80C105.62 638.80 106.43 641.00 108.05 641.00C109.67 641.00 110.48 638.80 112.10 638.80C113.72 638.80 114.53 641.00 116.15 641.00C117.77 641.00 118.58 638.80 120.20 638.80C121.82 638.80 122.63 641.00 124.25 641.00C125.87 641.00 126.68 638.80 128.30 638.80H130.00V642.40Z" fill="#f1c87c" stroke="#3a2c14" stroke-width="0.8"/><rect x="150.00" y="615.00" width="26.00" height="47.00" fill="#f2cb80"/><rect x="151.30" y="615.00" width="0.9" height="47.00" fill="#e0ae58" opacity="0.35"/><rect x="153.86" y="615.00" width="0.9" height="47.00" fill="#fbe3ae" opacity="0.35"/><rect x="157.06" y="615.00" width="0.9" height="47.00" fill="#e0ae58" opacity="0.35"/><rect x="160.90" y="615.00" width="0.9" height="47.00" fill="#fbe3ae" opacity="0.35"/><rect x="163.78" y="615.00" width="0.9" height="47.00" fill="#e0ae58" opacity="0.35"/><rect x="167.30" y="615.00" width="0.9" height="47.00" fill="#fbe3ae" opacity="0.35"/><rect x="169.86" y="615.00" width="0.9" height="47.00" fill="#e0ae58" opacity="0.35"/><rect x="173.06" y="615.00" width="0.9" height="47.00" fill="#fbe3ae" opacity="0.35"/><rect x="150.45" y="615.45" width="25.10" height="46.10" fill="none" stroke="#5a4a2c" stroke-width="0.9"/><rect x="153.40" y="617.80" width="19.20" height="5.60" fill="#efc77a" stroke="#5a4a2c" stroke-width="0.9" rx="1"/><rect x="155.00" y="619.20" width="16.00" height="2.80" fill="#f0c67a" stroke="#1a140a" stroke-width="1.1"/><path d="M150.50 625.50L175.50 625.50" stroke="#5a4a2c" stroke-width="0.8" fill="none"/><rect x="153.40" y="628.30" width="19.20" height="5.60" fill="#efc77a" stroke="#5a4a2c" stroke-width="0.9" rx="1"/><rect x="155.00" y="629.70" width="16.00" height="2.80" fill="#f0c67a" stroke="#1a140a" stroke-width="1.1"/><path d="M150.50 636.00L175.50 636.00" stroke="#5a4a2c" stroke-width="0.8" fill="none"/><rect x="153.40" y="638.80" width="19.20" height="5.60" fill="#efc77a" stroke="#5a4a2c" stroke-width="0.9" rx="1"/><rect x="155.00" y="640.20" width="16.00" height="2.80" fill="#f0c67a" stroke="#1a140a" stroke-width="1.1"/><path d="M150.50 646.50L175.50 646.50" stroke="#5a4a2c" stroke-width="0.8" fill="none"/><rect x="153.40" y="649.30" width="19.20" height="5.60" fill="#efc77a" stroke="#5a4a2c" stroke-width="0.9" rx="1"/><rect x="155.00" y="650.70" width="16.00" height="2.80" fill="#f0c67a" stroke="#1a140a" stroke-width="1.1"/><path d="M150.50 657.00L175.50 657.00" stroke="#5a4a2c" stroke-width="0.9" fill="none"/><rect x="40.30" y="670.00" width="26.00" height="47.00" fill="#f2cb80"/><rect x="41.60" y="670.00" width="0.9" height="47.00" fill="#e0ae58" opacity="0.35"/><rect x="44.16" y="670.00" width="0.9" height="47.00" fill="#fbe3ae" opacity="0.35"/><rect x="47.36" y="670.00" width="0.9" height="47.00" fill="#e0ae58" opacity="0.35"/><rect x="51.20" y="670.00" width="0.9" height="47.00" fill="#fbe3ae" opacity="0.35"/><rect x="54.08" y="670.00" width="0.9" height="47.00" fill="#e0ae58" opacity="0.35"/><rect x="57.60" y="670.00" width="0.9" height="47.00" fill="#fbe3ae" opacity="0.35"/><rect x="60.16" y="670.00" width="0.9" height="47.00" fill="#e0ae58" opacity="0.35"/><rect x="63.36" y="670.00" width="0.9" height="47.00" fill="#fbe3ae" opacity="0.35"/><rect x="40.75" y="670.45" width="25.10" height="46.10" fill="none" stroke="#5a4a2c" stroke-width="0.9"/><rect x="43.50" y="672.60" width="19.60" height="6.00" fill="#efc77a" stroke="#5a4a2c" stroke-width="0.9" rx="1"/><rect x="45.10" y="674.00" width="16.40" height="3.20" fill="#f0c67a" stroke="#1a140a" stroke-width="1.1"/><path d="M40.80 681.00L65.80 681.00" stroke="#5a4a2c" stroke-width="0.8" fill="none"/><rect x="43.70" y="684.60" width="8.40" height="28.00" fill="#efc77a" stroke="#5a4a2c" stroke-width="0.9" rx="1"/><rect x="45.80" y="686.60" width="4.20" height="24.00" fill="#f3cf88" stroke="#1a140a" stroke-width="1.0"/><rect x="54.70" y="684.60" width="8.40" height="28.00" fill="#efc77a" stroke="#5a4a2c" stroke-width="0.9" rx="1"/><rect x="56.80" y="686.60" width="4.20" height="24.00" fill="#f3cf88" stroke="#1a140a" stroke-width="1.0"/><path d="M53.30 681.00L53.30 717.00" stroke="#5a4a2c" stroke-width="0.6" fill="none"/><rect x="86.00" y="672.00" width="44.00" height="45.00" fill="#f2cb80"/><rect x="87.30" y="672.00" width="0.9" height="45.00" fill="#e0ae58" opacity="0.35"/><rect x="89.86" y="672.00" width="0.9" height="45.00" fill="#fbe3ae" opacity="0.35"/><rect x="93.06" y="672.00" width="0.9" height="45.00" fill="#e0ae58" opacity="0.35"/><rect x="96.90" y="672.00" width="0.9" height="45.00" fill="#fbe3ae" opacity="0.35"/><rect x="99.78" y="672.00" width="0.9" height="45.00" fill="#e0ae58" opacity="0.35"/><rect x="103.30" y="672.00" width="0.9" height="45.00" fill="#fbe3ae" opacity="0.35"/><rect x="105.86" y="672.00" width="0.9" height="45.00" fill="#e0ae58" opacity="0.35"/><rect x="109.06" y="672.00" width="0.9" height="45.00" fill="#fbe3ae" opacity="0.35"/><rect x="112.90" y="672.00" width="0.9" height="45.00" fill="#e0ae58" opacity="0.35"/><rect x="115.78" y="672.00" width="0.9" height="45.00" fill="#fbe3ae" opacity="0.35"/><rect x="119.30" y="672.00" width="0.9" height="45.00" fill="#e0ae58" opacity="0.35"/><rect x="121.86" y="672.00" width="0.9" height="45.00" fill="#fbe3ae" opacity="0.35"/><rect x="125.06" y="672.00" width="0.9" height="45.00" fill="#e0ae58" opacity="0.35"/><rect x="128.90" y="672.00" width="0.9" height="45.00" fill="#fbe3ae" opacity="0.35"/><rect x="86.45" y="672.45" width="43.10" height="44.10" fill="none" stroke="#5a4a2c" stroke-width="0.9"/><rect x="88.60" y="675.40" width="7.60" height="36.00" fill="#efc77a" stroke="#5a4a2c" stroke-width="0.9" rx="1"/><rect x="90.60" y="677.40" width="3.60" height="32.00" fill="#f3cf88" stroke="#6a5428" stroke-width="0.8"/><rect x="99.00" y="675.40" width="7.60" height="36.00" fill="#efc77a" stroke="#5a4a2c" stroke-width="0.9" rx="1"/><rect x="101.00" y="677.40" width="3.60" height="32.00" fill="#f3cf88" stroke="#6a5428" stroke-width="0.8"/><rect x="110.00" y="675.40" width="7.60" height="36.00" fill="#efc77a" stroke="#5a4a2c" stroke-width="0.9" rx="1"/><rect x="112.00" y="677.40" width="3.60" height="32.00" fill="#f3cf88" stroke="#6a5428" stroke-width="0.8"/><rect x="120.40" y="675.40" width="7.60" height="36.00" fill="#efc77a" stroke="#5a4a2c" stroke-width="0.9" rx="1"/><rect x="122.40" y="677.40" width="3.60" height="32.00" fill="#f3cf88" stroke="#6a5428" stroke-width="0.8"/><path d="M108.00 672.50L108.00 717.00" stroke="#3a2c14" stroke-width="0.9" fill="none"/><rect x="141.30" y="672.30" width="44.00" height="45.00" fill="#f2cb80"/><rect x="142.60" y="672.30" width="0.9" height="45.00" fill="#e0ae58" opacity="0.35"/><rect x="145.16" y="672.30" width="0.9" height="45.00" fill="#fbe3ae" opacity="0.35"/><rect x="148.36" y="672.30" width="0.9" height="45.00" fill="#e0ae58" opacity="0.35"/><rect x="152.20" y="672.30" width="0.9" height="45.00" fill="#fbe3ae" opacity="0.35"/><rect x="155.08" y="672.30" width="0.9" height="45.00" fill="#e0ae58" opacity="0.35"/><rect x="158.60" y="672.30" width="0.9" height="45.00" fill="#fbe3ae" opacity="0.35"/><rect x="161.16" y="672.30" width="0.9" height="45.00" fill="#e0ae58" opacity="0.35"/><rect x="164.36" y="672.30" width="0.9" height="45.00" fill="#fbe3ae" opacity="0.35"/><rect x="168.20" y="672.30" width="0.9" height="45.00" fill="#e0ae58" opacity="0.35"/><rect x="171.08" y="672.30" width="0.9" height="45.00" fill="#fbe3ae" opacity="0.35"/><rect x="174.60" y="672.30" width="0.9" height="45.00" fill="#e0ae58" opacity="0.35"/><rect x="177.16" y="672.30" width="0.9" height="45.00" fill="#fbe3ae" opacity="0.35"/><rect x="180.36" y="672.30" width="0.9" height="45.00" fill="#e0ae58" opacity="0.35"/><rect x="184.20" y="672.30" width="0.9" height="45.00" fill="#fbe3ae" opacity="0.35"/><rect x="141.75" y="672.75" width="43.10" height="44.10" fill="none" stroke="#5a4a2c" stroke-width="0.9"/><rect x="144.30" y="674.70" width="38.00" height="5.40" fill="#efc77a" stroke="#5a4a2c" stroke-width="0.9" rx="1"/><rect x="145.90" y="675.90" width="34.80" height="3.00" fill="#f0c67a" stroke="#3a2c14" stroke-width="0.9"/><path d="M141.80 682.70L184.80 682.70" stroke="#5a4a2c" stroke-width="0.8" fill="none"/><rect x="143.90" y="685.30" width="7.60" height="30.00" fill="#efc77a" stroke="#5a4a2c" stroke-width="0.9" rx="1"/><rect x="145.90" y="687.10" width="3.60" height="27.00" fill="#f3cf88" stroke="#1a140a" stroke-width="1.0"/><rect x="154.30" y="685.30" width="7.60" height="30.00" fill="#efc77a" stroke="#5a4a2c" stroke-width="0.9" rx="1"/><rect x="156.30" y="687.10" width="3.60" height="27.00" fill="#f3cf88" stroke="#1a140a" stroke-width="1.0"/><rect x="165.30" y="685.30" width="7.60" height="30.00" fill="#efc77a" stroke="#5a4a2c" stroke-width="0.9" rx="1"/><rect x="167.30" y="687.10" width="3.60" height="27.00" fill="#f3cf88" stroke="#1a140a" stroke-width="1.0"/><rect x="175.70" y="685.30" width="7.60" height="30.00" fill="#efc77a" stroke="#5a4a2c" stroke-width="0.9" rx="1"/><rect x="177.70" y="687.10" width="3.60" height="27.00" fill="#f3cf88" stroke="#1a140a" stroke-width="1.0"/><path d="M163.30 682.70L163.30 717.30" stroke="#3a2c14" stroke-width="0.9" fill="none"/><rect x="216.40" y="670.50" width="4.40" height="40.00" fill="#f2cb80" stroke="#6a5630" stroke-width="0.9"/></svg>
<div class="sel" style="left:191px;top:612px"></div>
<svg class="abs" style="left:191px;top:612px" width="55" height="55" viewBox="191 612 55 55"><rect x="205.00" y="615.00" width="26.00" height="47.00" fill="#f2cb80"/><rect x="206.30" y="615.00" width="0.9" height="47.00" fill="#e0ae58" opacity="0.35"/><rect x="208.86" y="615.00" width="0.9" height="47.00" fill="#fbe3ae" opacity="0.35"/><rect x="212.06" y="615.00" width="0.9" height="47.00" fill="#e0ae58" opacity="0.35"/><rect x="215.90" y="615.00" width="0.9" height="47.00" fill="#fbe3ae" opacity="0.35"/><rect x="218.78" y="615.00" width="0.9" height="47.00" fill="#e0ae58" opacity="0.35"/><rect x="222.30" y="615.00" width="0.9" height="47.00" fill="#fbe3ae" opacity="0.35"/><rect x="224.86" y="615.00" width="0.9" height="47.00" fill="#e0ae58" opacity="0.35"/><rect x="228.06" y="615.00" width="0.9" height="47.00" fill="#fbe3ae" opacity="0.35"/><rect x="205.45" y="615.45" width="25.10" height="46.10" fill="none" stroke="#5a4a2c" stroke-width="0.9"/><rect x="208.40" y="619.20" width="8.40" height="32.40" fill="#efc77a" stroke="#5a4a2c" stroke-width="0.9" rx="1"/><rect x="210.50" y="621.60" width="4.20" height="27.60" fill="#f3cf88" stroke="#3a2c14" stroke-width="0.9"/><rect x="219.40" y="619.20" width="8.40" height="32.40" fill="#efc77a" stroke="#5a4a2c" stroke-width="0.9" rx="1"/><rect x="221.50" y="621.60" width="4.20" height="27.60" fill="#f3cf88" stroke="#3a2c14" stroke-width="0.9"/><path d="M218.00 615.50L218.00 655.00" stroke="#5a4a2c" stroke-width="0.6" fill="none"/><path d="M205.50 655.00L230.50 655.00" stroke="#5a4a2c" stroke-width="0.9" fill="none"/></svg>
<div class="tip"><span>Base Cabinet 24"x 42"</span></div>
<svg class="abs" style="left:210px;top:604px" width="16" height="8"><path d="M2.6 0L8 7L13.4 0Z" fill="#f7bd4a"/></svg>
<div class="ntip"><span>Base Cabinet 24"x 42"</span></div>
<div class="frame"></div>
</body></html>
